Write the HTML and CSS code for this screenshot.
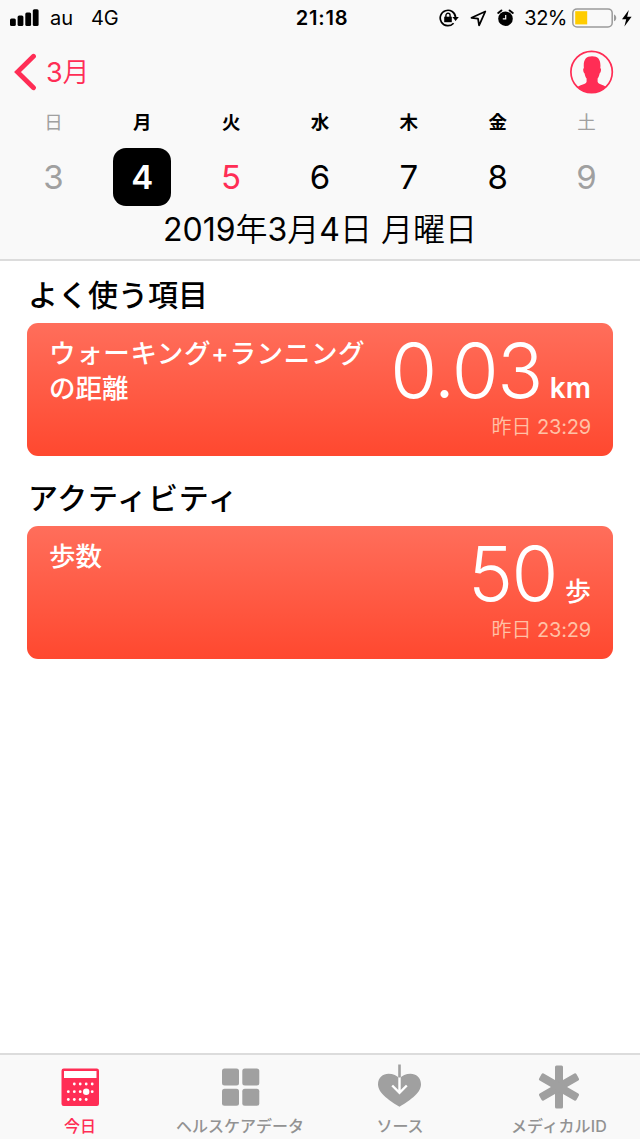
FILE: index.html
```html
<!DOCTYPE html>
<html lang="ja">
<head>
<meta charset="utf-8">
<title>ヘルスケア</title>
<link rel="stylesheet" href="styles.css">
</head>
<body>
<div class="screen">
  <header class="header">
    <div class="status">
      <div class="status-side">
        <svg class="signal" width="30" height="18" viewBox="0 0 30 18"><rect x="0" y="9.5" width="5.8" height="7.5" rx="1.5"/><rect x="7.6" y="6.5" width="5.8" height="10.5" rx="1.5"/><rect x="15.3" y="3.5" width="5.8" height="13.5" rx="1.5"/><rect x="22.8" y="0.2" width="5.8" height="16.8" rx="1.5"/></svg>
        <span class="carrier">au</span>
        <span class="network">4G</span>
      </div>
      <div class="clock">21:18</div>
      <div class="status-side status-right">
        <svg class="lock" width="20" height="18" viewBox="0 0 20 18"><path d="M14.6 14.2A7.7 7.7 0 1 1 16.6 8.4" fill="none" stroke="#000" stroke-width="1.7"/><path d="M13.4 8h6.4l-3.2 4z"/><path d="M5.200 7.700h7.600v5.500H5.200z"/><path d="M6.9 8V6.4a2.1 2.1 0 0 1 4.2 0V8" fill="none" stroke="#000" stroke-width="1.4"/></svg>
        <svg class="arrow" width="17" height="17" viewBox="0 0 17 17"><path d="M15.3 1.500 1.500 7.800l6.500.9 1.100 6.600z" fill="none" stroke="#000" stroke-width="1.800" stroke-linejoin="round"/></svg>
        <svg class="alarm" width="17" height="18" viewBox="0 0 17 18"><circle cx="8.5" cy="9.7" r="7.300"/><path d="M1.200 4 4.400 1.400M15.800 4 12.600 1.400" stroke="#000" stroke-width="1.900" stroke-linecap="round"/><path d="M8.700 6v3.800H5.800" fill="none" stroke="#f9f9f9" stroke-width="1.200"/></svg>
        <span class="percent">32%</span>
        <svg class="battery" width="46" height="20" viewBox="0 0 46 20"><rect x=".8" y=".9" width="39.4" height="18" rx="4.2" fill="none" stroke="#9b9b9b" stroke-width="1.5"/><rect x="3.2" y="3.2" width="12" height="13.2" fill="#fc0"/><path d="M42 6.5c3 1.2 3 5.6 0 6.8z" fill="#9b9b9b"/></svg>
        <svg class="bolt" width="10" height="17" viewBox="0 0 10 17"><path d="M6.8 0 0 9.3h4.2L2.4 16.5 9.6 6.7H5.2z"/></svg>
      </div>
    </div>
    <div class="nav">
      <div class="back">
        <svg width="22" height="38" viewBox="0 0 22 38"><path d="M19.500 3.300 3.500 19l16 15.700" fill="none" stroke="#ff2d55" stroke-width="4.800" stroke-linecap="round" stroke-linejoin="miter"/></svg>
        <span class="back-label"><span class="num">3</span>月</span>
      </div>
      <svg class="profile" width="44" height="44" viewBox="0 0 44 44"><circle cx="21.600" cy="22" r="20.700" fill="none" stroke="#ff2d55" stroke-width="1.700"/><path d="M7.500 37c3-2.500 8.200-2.300 9.100-5.200v-3.400c-1.100-1.300-1.600-3-2-5-1.400-.6-2-5.100-.7-5.100C13.100 10.500 15.300 6.300 22.100 6.300s9 4.200 8.200 12c1.300 0 .7 4.500-.7 5.100-.4 2-.9 3.700-2 5v3.400c.9 2.900 5.700 2.700 8.500 5.200a20.500 20.500 0 0 1-28.600 0z" fill="#ff2d55"/></svg>
    </div>
    <div class="week weekdays">
      <span class="dim">日</span><span>月</span><span>火</span><span>水</span><span>木</span><span>金</span><span class="dim">土</span>
    </div>
    <div class="week days">
      <span class="dim">3</span><span class="selected">4</span><span class="today">5</span><span>6</span><span>7</span><span>8</span><span class="dim">9</span>
    </div>
    <div class="date"><span class="num">2019</span>年<span class="num">3</span>月<span class="num">4</span>日 月曜日</div>
  </header>
  <main class="content">
    <h2 class="heading">よく使う項目</h2>
    <section class="card">
      <h3 class="card-title"><span class="title-wide">ウォーキング+ランニング</span><br>の距離</h3>
      <div class="reading">
        <div class="value"><span class="number">0.03</span><span class="unit">km</span></div>
        <div class="time">昨日 <span class="num">23:29</span></div>
      </div>
    </section>
    <h2 class="heading heading-activity">アクティビティ</h2>
    <section class="card">
      <h3 class="card-title">歩数</h3>
      <div class="reading">
        <div class="value"><span class="number">50</span><span class="unit unit-steps">歩</span></div>
        <div class="time">昨日 <span class="num">23:29</span></div>
      </div>
    </section>
  </main>
  <nav class="tabs">
    <div class="tab active">
      <svg width="44" height="46" viewBox="0 0 44 46"><rect x="3.500" y="4.500" width="37.500" height="37.500" rx="2.200" fill="#ff2d55"/><path d="M6 7h32.500v7H6z" fill="#fff"/><g fill="#fff"><circle cx="16.300" cy="20" r="1.400"/><circle cx="22.200" cy="20" r="1.400"/><circle cx="28.200" cy="20" r="1.400"/><circle cx="34.200" cy="20" r="1.400"/><circle cx="10.300" cy="27.700" r="1.400"/><circle cx="16.300" cy="27.700" r="1.400"/><circle cx="22.200" cy="27.700" r="1.400"/><circle cx="28.200" cy="27.700" r="3.200"/><circle cx="34.200" cy="27.700" r="1.400"/><circle cx="10.300" cy="35.500" r="1.400"/><circle cx="16.300" cy="35.500" r="1.400"/><circle cx="22.200" cy="35.500" r="1.400"/><circle cx="28.200" cy="35.500" r="1.400"/></g></svg>
      <span class="tab-label">今日</span>
    </div>
    <div class="tab">
      <svg width="44" height="46" viewBox="0 0 44 46" fill="#a0a0a0"><rect x="4" y="4.500" width="17" height="17" rx="2.500"/><rect x="24.300" y="4.500" width="17" height="17" rx="2.500"/><rect x="4" y="24.800" width="17" height="17" rx="2.500"/><rect x="24.300" y="24.800" width="17" height="17" rx="2.500"/></svg>
      <span class="tab-label">ヘルスケアデータ</span>
    </div>
    <div class="tab">
      <svg width="44" height="46" viewBox="0 0 44 46"><path d="M21.500 42.800C13.500 37.500 0 30 0 20.200 0 13.500 5 9.700 10.500 9.700c4.500 0 8.500 1.500 11 4.800 2.500-3.300 6.500-4.800 11-4.800 5.500 0 10.500 3.800 10.500 10.500 0 9.800-13.500 17.300-21.500 22.600z" fill="#a0a0a0"/><path d="M21.500 13v16M14.200 21.500l7.300 7.300 7.300-7.300" fill="none" stroke="#fff" stroke-width="2.400"/><path d="M21.500 .5V13.500" stroke="#a0a0a0" stroke-width="2.600"/></svg>
      <span class="tab-label">ソース</span>
    </div>
    <div class="tab">
      <svg width="44" height="46" viewBox="0 0 44 46" fill="#a0a0a0"><rect x="17" y="1.500" width="8" height="43" rx="1.500"/><rect x="17" y="1.500" width="8" height="43" rx="1.500" transform="rotate(60 21 23)"/><rect x="17" y="1.500" width="8" height="43" rx="1.500" transform="rotate(120 21 23)"/></svg>
      <span class="tab-label tab-id">メディカルID</span>
    </div>
  </nav>
</div>
</body>
</html>
```
FILE: styles.css
```css
* { box-sizing: border-box; }
body {
  margin: 0;
  background: #fff;
  color: #000;
  font-family: Inter, "Noto Sans CJK JP", sans-serif;
}
svg { display: block; flex: none; }
.screen { display: flex; flex-direction: column; width: 640px; height: 1139px; overflow: hidden; }
.num { font-weight: 400; }

.header { height: 261px; background: #f9f9f9; border-bottom: 2px solid #dcdcdc; }
.status { display: grid; grid-template-columns: 1fr auto 1fr; align-items: center; height: 36px; padding: 0 8px 0 10px; font-size: 20px; line-height: 24px; }
.status-side { display: flex; align-items: center; }
.status-right { justify-content: flex-end; }
.carrier { margin-left: 10px; }
.network { margin-left: 18px; letter-spacing: -0.3px; }
.clock { font-weight: 600; padding-left: 2px; letter-spacing: 0.8px; }
.arrow { margin-left: 11px; }
.alarm { margin-left: 10px; }
.percent { margin: 0 5px 0 10px; letter-spacing: -0.5px; }
.bolt { margin-left: 4px; }

.nav { display: flex; align-items: center; justify-content: space-between; height: 72px; padding: 0 26px 0 14px; }
.back { display: flex; align-items: center; gap: 10px; color: #ff2d55; }
.back-label { padding-top: 1px; font-size: 27px; line-height: 36px; font-weight: 350; letter-spacing: -0.3px; }

.week { display: grid; grid-template-columns: repeat(7, 1fr); width: 622px; margin-left: 9px; justify-items: center; align-items: center; text-align: center; }
.weekdays { height: 28px; font-size: 18.500px; line-height: 27px; font-weight: 700; }
.weekdays .dim { font-weight: 400; }
.days { height: 82px; font-size: 33px; line-height: 58px; }
.days span { width: 58px; height: 58px; }
.dim { color: #a0a0a0; }
.today { color: #ff2d55; }
.selected { background: #000; color: #fff; border-radius: 13px; font-weight: 600; }
.date { margin-top: -12px; text-align: center; font-size: 32px; line-height: 48px; font-weight: 350; }

.content { flex: 1; padding: 0 27px; }
.heading { margin: 0; padding: 13px 0 0 1px; height: 62px; font-size: 30px; line-height: 42px; font-weight: 500; }
.heading-activity { height: 70px; padding-top: 21px; letter-spacing: 0.8px; }
.card { display: flex; justify-content: space-between; height: 133px; padding: 13px 22px 12px 21px; border-radius: 11px; background: linear-gradient(#ff6e5b, #ff482f); color: #fff; }
.card-title { margin: 0; padding-left: 1px; font-size: 26.500px; line-height: 35px; font-weight: 500; white-space: nowrap; }
.title-wide { letter-spacing: 0.65px; }
.reading { text-align: right; white-space: nowrap; }
.value { display: flex; justify-content: flex-end; align-items: baseline; height: 78px; line-height: 68px; }
.number { font-size: 76px; font-weight: 300; letter-spacing: -1.500px; }
.unit { margin-left: 8px; font-size: 28px; line-height: 34px; font-weight: 600; }
.unit-steps { font-size: 26px; font-weight: 500; }
.time { font-size: 20px; line-height: 26px; font-weight: 350; color: #ffc1a6; }
.time .num { letter-spacing: -0.2px; }

.tabs { display: grid; grid-template-columns: repeat(4, 1fr); height: 86px; border-top: 2px solid #dcdcdc; background: #f9f9f9; color: #929292; }
.tab { display: flex; flex-direction: column; align-items: center; padding-top: 9px; }
.tab-label { margin-top: 4px; font-size: 16px; line-height: 24px; font-weight: 500; white-space: nowrap; }
.tab-id { margin-left: -2px; letter-spacing: 0.2px; }
.active { color: #ff2d55; }
```
